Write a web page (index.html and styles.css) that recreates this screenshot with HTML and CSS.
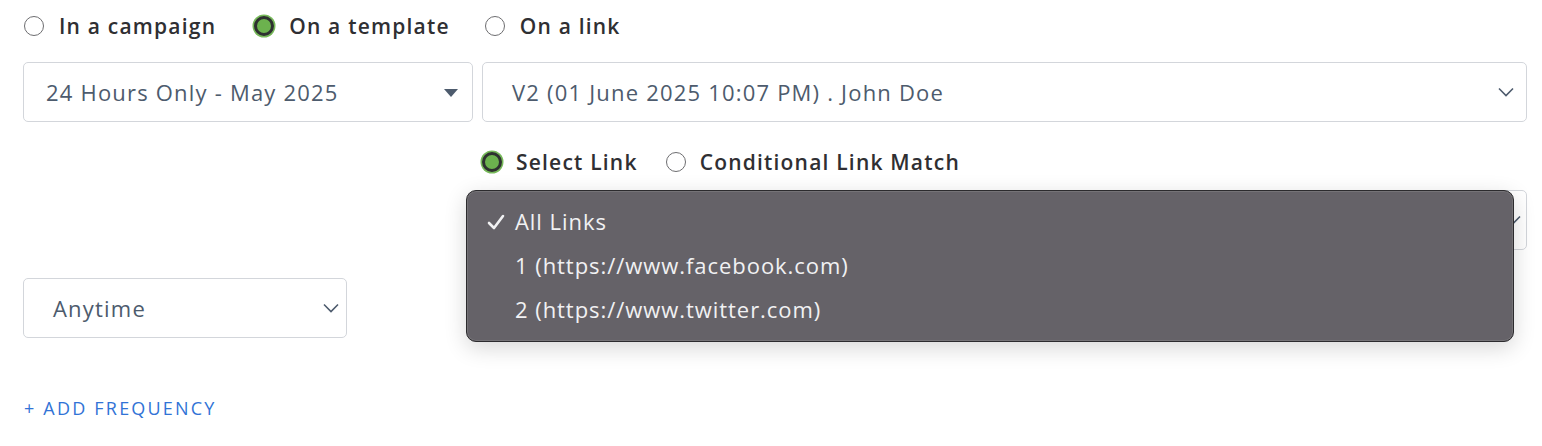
FILE: index.html
```html
<!DOCTYPE html>
<html>
<head>
<meta charset="utf-8">
<link rel="stylesheet" href="styles.css">
</head>
<body>
<div class="page">
  <div class="radio-row top">
    <label class="radio"><span class="dot"></span><span class="lbl">In a campaign</span></label>
    <label class="radio"><span class="dot on"></span><span class="lbl">On a template</span></label>
    <label class="radio"><span class="dot"></span><span class="lbl">On a link</span></label>
  </div>

  <div class="grid">
    <div class="select sel-campaign">
      <span class="val">24 Hours Only - May 2025</span>
      <svg class="caret" width="14" height="8" viewBox="0 0 14 8"><path d="M0 0H14L7 8Z" fill="#4d5b6d"/></svg>
    </div>
    <div class="select sel-version">
      <span class="val">V2 (01 June 2025 10:07 PM) . John Doe</span>
      <svg class="chev" width="16" height="10" viewBox="0 0 16 10"><path d="M1 1.5L8 8.5L15 1.5" fill="none" stroke="#4d5b6d" stroke-width="1.6"/></svg>
    </div>

    <div class="radio-row sub">
      <label class="radio"><span class="dot on"></span><span class="lbl">Select Link</span></label>
      <label class="radio"><span class="dot"></span><span class="lbl">Conditional Link Match</span></label>
    </div>

    <div class="link-wrap">
      <div class="select sel-link">
        <span class="val">All Links</span>
        <svg class="chev" width="16" height="10" viewBox="0 0 16 10"><path d="M1 1.5L8 8.5L15 1.5" fill="none" stroke="#4d5b6d" stroke-width="1.6"/></svg>
      </div>
      <ul class="menu">
        <li class="item checked"><svg class="check" width="18" height="16" viewBox="0 0 18 16"><path d="M2 9L7 14L16 2" fill="none" stroke="#f1f1f3" stroke-width="2.6" stroke-linecap="round" stroke-linejoin="round"/></svg>All Links</li>
        <li class="item">1 (https://www.facebook.com)</li>
        <li class="item">2 (https://www.twitter.com)</li>
      </ul>
    </div>
  </div>

  <div class="select sel-time">
    <span class="val">Anytime</span>
    <svg class="chev" width="16" height="10" viewBox="0 0 16 10"><path d="M1 1.5L8 8.5L15 1.5" fill="none" stroke="#4d5b6d" stroke-width="1.6"/></svg>
  </div>

  <a class="add">+ ADD FREQUENCY</a>
</div>
</body>
</html>
```

FILE: styles.css
```css
* { box-sizing: border-box; }
html, body { margin: 0; padding: 0; background: #fff; }
body { font-family: "Open Sans", "Liberation Sans", sans-serif; color: #2f2f33; }

.page { padding: 14px 15px 0 23px; }

.radio-row { display: flex; align-items: center; height: 24px; }
.radio-row.top { margin-left: 1px; }
.radio { display: flex; align-items: center; cursor: pointer; }
.radio-row.top .radio { margin-right: 38px; }
.radio-row.top .radio:nth-child(2) { margin-right: 35px; }
.dot {
  width: 20px; height: 20px; border-radius: 50%;
  border: 1px solid #6d6d70; background: #fff; flex: none;
}
.dot.on {
  background: #6cb24e;
  border: 3px solid #2e3130;
  box-shadow: 0 0 0 1.5px #77b95a;
}
.lbl {
  margin-left: 15px; font-size: 21px; font-weight: 600;
  letter-spacing: 1.2px; color: #2f2f33;
}

.grid {
  display: grid;
  grid-template-columns: 450px 1045px;
  column-gap: 9px;
  margin-top: 24px;
}

.select {
  position: relative;
  display: flex; align-items: center; justify-content: space-between;
  height: 60px;
  border: 1px solid #d3d6db; border-radius: 5px;
  background: #fff;
  font-size: 22px; letter-spacing: 1.2px; color: #4d5b6d;
}
.sel-campaign { padding: 0 14px 0 22px; }
.sel-version { padding: 0 12px 0 29px; }
.caret { margin-top: 1px; }

.radio-row.sub { grid-column: 2; margin-top: 28px; }
.radio-row.sub .radio:first-child { margin-right: 28px; }
.radio-row.sub .lbl { margin-left: 14px; }

.link-wrap { grid-column: 2; position: relative; margin-top: 16px; }
.sel-link { padding: 0 5px 0 29px; }

.menu {
  position: absolute; left: -16px; top: 0;
  width: 1048px; height: 152px;
  margin: 0; padding: 14px 0 0 0; list-style: none;
  background: #656268;
  border: 1px solid #2c2b2e;
  border-radius: 10px;
  box-shadow: 0 0 0 1px rgba(150,150,150,0.35) inset, 0 6px 22px rgba(0,0,0,0.16);
}
.item {
  position: relative;
  height: 44px; line-height: 32px;
  padding-left: 48px;
  font-size: 22px; letter-spacing: 0.95px; color: #f1f1f3;
}
.check { position: absolute; left: 20px; top: 9px; }

.sel-time { width: 324px; margin-top: 28px; padding: 0 7px 0 29px; }

.add {
  display: block; margin-top: 58px; margin-left: 1px;
  font-size: 18px; color: #3173d6; letter-spacing: 2.2px; text-decoration: none;
}
```
